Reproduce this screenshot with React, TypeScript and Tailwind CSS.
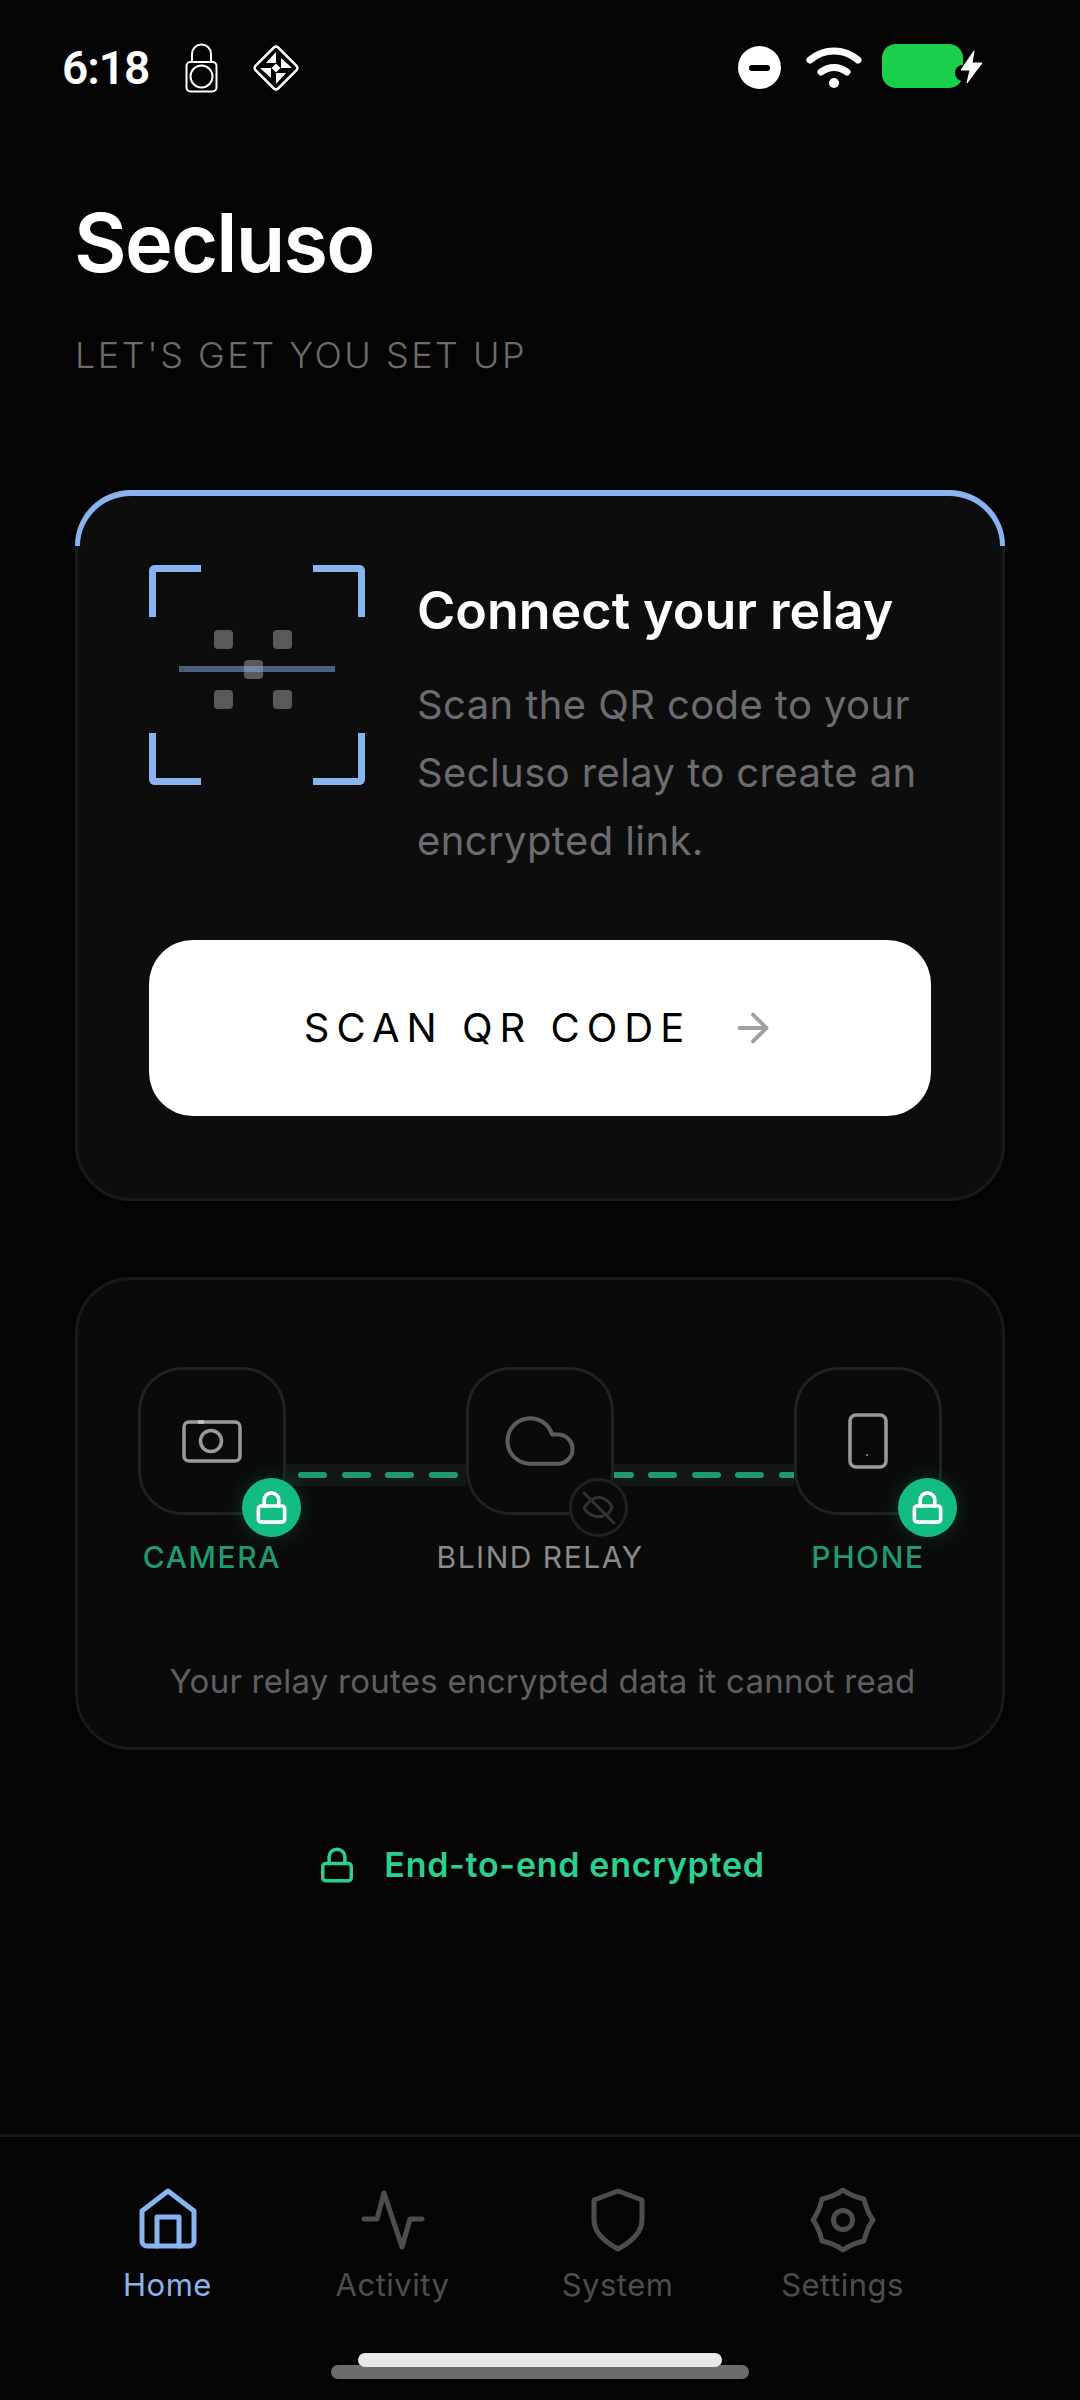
import { ArrowRight, Cloud, Lock } from 'lucide-react';

const font = { fontFamily: 'Inter, sans-serif' };

function StatusBar() {
  return (
    <div className="flex h-[136px] items-start pl-[62px] pt-[44px]">
      <span className="w-[123px] text-[46px] leading-[48px] font-semibold tracking-[-1px] text-white" style={{ fontFamily: 'Roboto, sans-serif' }}>
        6:18
      </span>
      {/* padlock notification */}
      <svg width="33" height="50" viewBox="0 0 33 50" fill="none" stroke="white" strokeWidth="2" className="-mt-px">
        <path d="M7 19V11a9.500 9.500 0 0 1 19 0v8" />
        <rect x="1.500" y="19" width="30" height="29.500" rx="4" />
        <circle cx="16.500" cy="33.500" r="11" />
      </svg>
      {/* diamond notification */}
      <svg width="48" height="48" viewBox="0 0 48 48" className="ml-[34px]">
        <rect x="8" y="8" width="32" height="32" rx="3" fill="none" stroke="white" strokeWidth="2.500" transform="rotate(45 24 24)" />
        {[0, 90, 180, 270].map((deg) => (
          <g key={deg} transform={`rotate(${deg} 24 24)`} fill="white">
            <polygon points="24,8 24,19 14,19" />
            <polygon points="24,19.500 28.500,24 24,24" />
          </g>
        ))}
      </svg>
      <div className="ml-auto flex items-start pr-[117px]">
        <div className="mt-[2px] flex h-[43px] w-[43px] items-center justify-center rounded-full bg-white">
          <div className="h-[6px] w-[21px] rounded-full bg-black" />
        </div>
        <svg width="56" height="42" viewBox="0 0 56 42" fill="none" stroke="white" strokeLinecap="round" className="ml-[25px] mt-[3px]">
          <path d="M4 13 C18 1 38 1 52 13" strokeWidth="7" />
          <path d="M15 25 C23 19 33 19 41 25" strokeWidth="7" />
          <circle cx="28" cy="36" r="5" fill="white" stroke="none" />
        </svg>
        <div className="relative ml-[20px] h-[44px] w-[81px] rounded-[14px] bg-[#1ad04a]">
          <div className="absolute left-[73px] top-[21px] h-[16px] w-[8px] rounded-l-full bg-black" />
          <svg width="36" height="38" viewBox="0 0 36 38" className="absolute left-[74px] top-[6px]">
            <polygon points="18,1 5,20 14,20 11,33 26,13 16,13" fill="white" stroke="white" strokeWidth="1" strokeLinejoin="round" />
          </svg>
        </div>
      </div>
    </div>
  );
}

function ScanFrame() {
  const corner = 'absolute h-[52px] w-[52px] border-[#8ab4f0]';
  const dot = 'absolute h-[19px] w-[19px] rounded-[4px] bg-[#595959]';
  return (
    <div className="relative h-[220px] w-[216px] shrink-0">
      <div className={`${corner} left-0 top-0 rounded-tl-[6px] border-l-[7px] border-t-[7px]`} />
      <div className={`${corner} right-0 top-0 rounded-tr-[6px] border-r-[7px] border-t-[7px]`} />
      <div className={`${corner} bottom-0 left-0 rounded-bl-[6px] border-b-[7px] border-l-[7px]`} />
      <div className={`${corner} bottom-0 right-0 rounded-br-[6px] border-b-[7px] border-r-[7px]`} />
      <div className={`${dot} left-[65px] top-[65px]`} />
      <div className={`${dot} left-[124px] top-[65px]`} />
      <div className={`${dot} left-[65px] top-[125px]`} />
      <div className={`${dot} left-[124px] top-[125px]`} />
      <div className={`${dot} left-[95px] top-[95px]`} />
      <div className="absolute left-[30px] top-[101px] h-[6px] w-[156px] bg-[#8ab4f0]/50" />
    </div>
  );
}

function LockBadge() {
  return (
    <div className="absolute -right-[18px] top-[108px] flex h-[59px] w-[59px] items-center justify-center rounded-full bg-[#12bc84] shadow-[0_0_22px_rgba(18,188,132,0.22)]">
      <Lock size={35} strokeWidth={2.500} className="text-white" />
    </div>
  );
}

function EyeOffBadge() {
  return (
    <div className="absolute left-[100px] top-[108px] flex h-[59px] w-[59px] items-center justify-center rounded-full border-[3px] border-[#1c2321] bg-[#0a0a0a]">
      <svg width="36" height="36" viewBox="0 0 36 36" fill="none" stroke="#2e3531" strokeWidth="3" strokeLinecap="round">
        <path d="M3 3 L33 33" />
        <path d="M12 9 C19 5 27 9 31 17 C30 21 28 23 26 25" />
        <path d="M8 12 C6 14 4 16 3 18 C7 25 15 28 22 26" />
      </svg>
    </div>
  );
}

function Node({ label, active, children, badge }: { label: string; active?: boolean; children: React.ReactNode; badge: React.ReactNode }) {
  return (
    <div className="flex w-[148px] shrink-0 flex-col items-center">
      <div className="relative z-10 flex h-[148px] w-[148px] items-center justify-center rounded-[44px] border-[3px] border-[#1c2321] bg-[#0a0a0a]">
        {children}
        {badge}
      </div>
      <span className={`mt-[24px] whitespace-nowrap text-[30px] leading-[36px] ${active ? 'font-medium tracking-[1.600px] text-[#219a70]' : 'tracking-[1.500px] text-[#8a8a8a]'}`}>
        {label}
      </span>
    </div>
  );
}

function Connector({ offset }: { offset: string }) {
  return (
    <div className="mt-[97px] flex h-[22px] flex-1 items-center gap-[14.500px] overflow-hidden bg-[#131715]">
      <div className={offset} />
      {[0, 1, 2, 3, 4].map((i) => (
        <div key={i} className="h-[6px] w-[29px] shrink-0 rounded-full bg-[#1f9a6c]" />
      ))}
    </div>
  );
}

function NavItem({ label, active, children }: { label: string; active?: boolean; children: React.ReactNode }) {
  return (
    <div className={`flex w-[225px] flex-col items-center ${active ? 'text-[#8ab4f0]' : 'text-[#4d4d4f]'}`}>
      <svg width="68" height="68" viewBox="-34 -34 68 68" fill="none" stroke="currentColor" strokeWidth="5" strokeLinecap="round" strokeLinejoin="round">
        {children}
      </svg>
      <span className="mt-[12px] text-[31px] leading-[38px] tracking-[0.5px]">{label}</span>
    </div>
  );
}

export default function App() {
  return (
    <div className="flex h-[2400px] w-[1080px] flex-col overflow-hidden bg-[#040404]" style={font}>
      <StatusBar />

      <div className="px-[75px]">
        <h1 className="-ml-px mt-[63px] text-[81px] leading-[88px] font-semibold tracking-[-1.800px] text-white">Secluso</h1>
        <p className="mt-[46px] text-[36px] leading-[44px] font-light tracking-[2.500px] text-[#6b6b6b]">LET'S GET YOU SET UP</p>

        {/* Connect card */}
        <div className="relative mt-[113px] h-[711px] rounded-[56px] border-[3px] border-[#161b19] bg-[#0d0d0d] px-[71px] pt-[72px]">
          <div className="absolute -inset-x-[3px] -top-[3px] h-[56px] rounded-t-[56px] border-x-[5px] border-t-[6px] border-[#8ab4f0] [border-bottom:0]" />
          <div className="flex gap-[52px]">
            <ScanFrame />
            <div className="pt-[16px]">
              <h2 className="text-[52px] leading-[60px] font-semibold text-white">Connect your relay</h2>
              <p className="mt-[30px] w-[520px] text-[40px] leading-[68px] tracking-[0.4px] text-[#6b6b70]">
                Scan the QR code to your Secluso relay to create an encrypted link.
              </p>
            </div>
          </div>
          <button className="mt-[65px] flex h-[176px] w-full items-center justify-center gap-[39px] rounded-[44px] bg-white">
            <span className="text-[40px] leading-[48px] tracking-[7px] text-black">SCAN QR CODE</span>
            <ArrowRight size={46} strokeWidth={2} className="text-[#a0a0a0]" />
          </button>
        </div>

        {/* Relay diagram card */}
        <div className="mt-[76px] h-[473px] rounded-[56px] border-[3px] border-[#161b19] bg-[#0a0a0a] px-[60px] pt-[87px]">
          <div className="flex">
            <Node label="CAMERA" active badge={<LockBadge />}>
              <svg width="60" height="44" viewBox="0 0 60 44" fill="none" stroke="#9a9a9a" strokeWidth="3.500">
                <rect x="2" y="3" width="56" height="39" rx="5" />
                <circle cx="29" cy="22" r="10.500" />
                <path d="M16 3h6" stroke="#c8c8c8" />
              </svg>
            </Node>
            <Connector offset="-ml-[2.500px]" />
            <Node label="BLIND RELAY" badge={<EyeOffBadge />}>
              <Cloud size={78} strokeWidth={1.250} className="text-[#5c5c5c]" />
            </Node>
            <Connector offset="-ml-[24px]" />
            <Node label="PHONE" active badge={<LockBadge />}>
              <svg width="40" height="56" viewBox="0 0 40 56" fill="none" stroke="#9a9a9a" strokeWidth="3.500">
                <rect x="2" y="2" width="36" height="52" rx="6" />
                <circle cx="19" cy="42" r="1" fill="#9a9a9a" stroke="none" />
              </svg>
            </Node>
          </div>
          <p className="mt-[84px] pl-[5px] text-center text-[33px] leading-[44px] tracking-[0.25px] text-[#5f5f62]">Your relay routes encrypted data it cannot read</p>
        </div>

        <div className="mt-[95px] flex items-center justify-center gap-[28px] pl-[3px]">
          <Lock size={38} strokeWidth={2.200} className="text-[#2bd08f]" />
          <span className="text-[34px] leading-[40px] font-semibold tracking-[0.7px] text-[#2bd08f]">End-to-end encrypted</span>
        </div>
      </div>

      {/* Bottom tab bar */}
      <div className="relative mt-auto h-[266px] border-t-[3px] border-[#171717] pl-[55px] pt-[49px]">
        <div className="flex">
          <NavItem label="Home" active>
            <path d="M-26 -9 L0 -29 L26 -9 V21 a5 5 0 0 1 -5 5 H-21 a5 5 0 0 1 -5 -5 Z" />
            <path d="M-11 26 V-3 H11 V26" />
          </NavItem>
          <NavItem label="Activity">
            <path d="M-29 -1 H-16 L-9 -27 L9 27 L17 -1 H29" />
          </NavItem>
          <NavItem label="System">
            <path d="M0 -29 L24 -20 V0 C24 13 13 22 0 29 C-13 22 -24 13 -24 0 V-20 Z" />
          </NavItem>
          <NavItem label="Settings">
            <path d="M0 -30 Q8 -24 21 -21 Q24 -8 30 0 Q24 8 21 21 Q8 24 0 30 Q-8 24 -21 21 Q-24 8 -30 0 Q-24 -8 -21 -21 Q-8 -24 0 -30 Z" />
            <circle cx="0" cy="0" r="9.500" />
          </NavItem>
        </div>
        {/* gesture bar */}
        <div className="absolute left-[331px] top-[228px] h-[14px] w-[418px] rounded-full bg-[#6b6b6b]" />
        <div className="absolute left-[358px] top-[216px] h-[14px] w-[364px] rounded-full bg-[#e8e8e8]" />
      </div>
    </div>
  );
}
